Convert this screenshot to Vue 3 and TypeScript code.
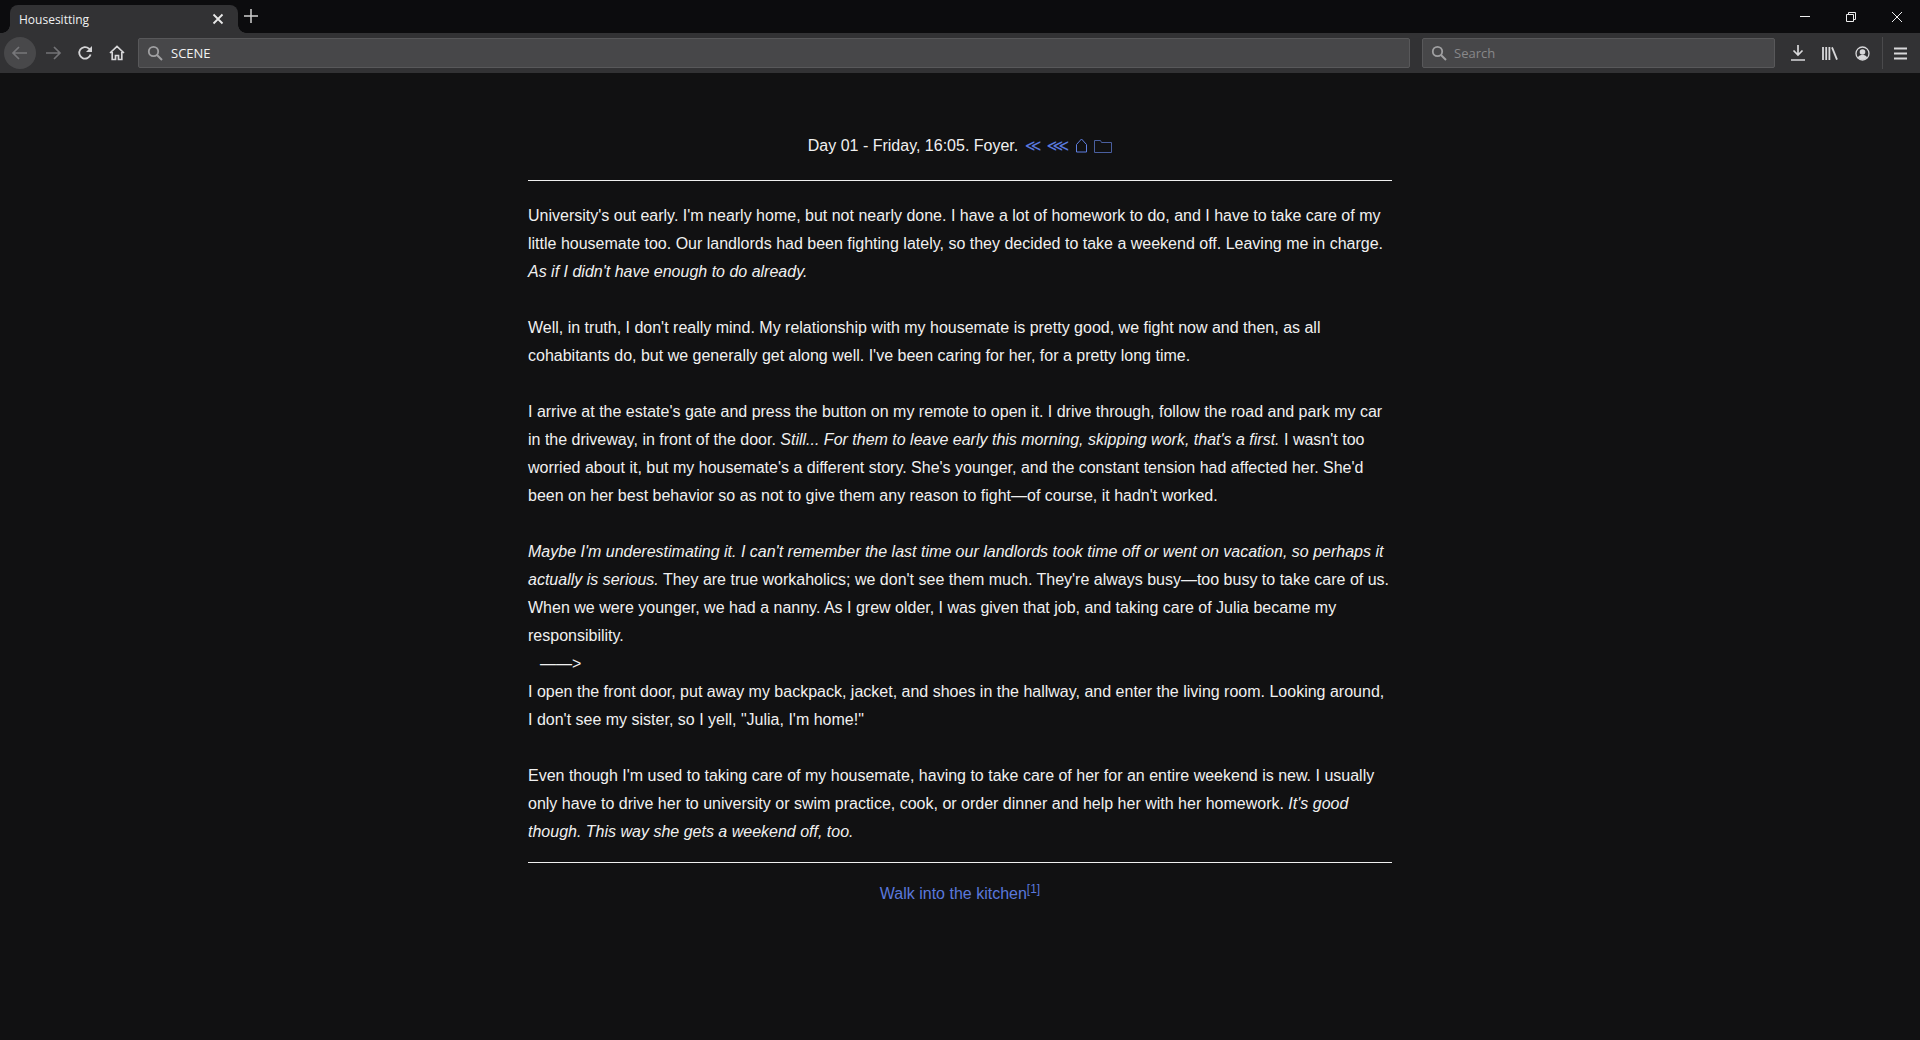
<script setup lang="ts">
const placeholder = 'Search';
</script>

<template>
  <div class="window">
    <div class="tabbar">
      <div class="tab">
        <span class="tab-title">Housesitting</span>
        <svg class="tab-close" width="12" height="12" viewBox="0 0 12 12"><path d="M1.5 1.5l9 9M10.5 1.5l-9 9" stroke="#e8e8e8" stroke-width="1.8" fill="none" /></svg>
      </div>
      <svg class="new-tab" width="14" height="14" viewBox="0 0 14 14"><path d="M7 0v14M0 7h14" stroke="#d0d0d0" stroke-width="1.5" fill="none" /></svg>
      <div class="tabbar-fill"></div>
      <div class="win-buttons">
        <svg width="12" height="12" viewBox="0 0 12 12"><path d="M1 5.500h10" stroke="#eee" stroke-width="1" fill="none" /></svg>
        <svg width="12" height="12" viewBox="0 0 12 12"><path d="M1.500 3.500h7v7h-7zM3.500 3.500v-2h7v7h-2" stroke="#eee" stroke-width="1" fill="none" /></svg>
        <svg width="12" height="12" viewBox="0 0 12 12"><path d="M1 1l10 10M11 1L1 11" stroke="#eee" stroke-width="1" fill="none" /></svg>
      </div>
    </div>
    <div class="toolbar">
      <div class="nav-back">
        <svg width="18" height="16" viewBox="0 0 18 16"><path d="M16 8H2M8 2L2 8l6 6" stroke="#77777a" stroke-width="1.7" fill="none" /></svg>
      </div>
      <svg class="nav-fwd" width="18" height="16" viewBox="0 0 18 16"><path d="M2 8h14M10 2l6 6-6 6" stroke="#737376" stroke-width="1.7" fill="none" /></svg>
      <svg class="nav-reload" width="16" height="16" viewBox="0 0 16 16"><path d="M13.600 9.500A5.800 5.800 0 1 1 12 3.600L14 5.400" stroke="#d4d4d6" stroke-width="1.800" fill="none" /><path d="M15 1v6H9z" fill="#d4d4d6" /></svg>
      <svg class="nav-home" width="16" height="16" viewBox="0 0 16 16"><path d="M1 8l7-6.500L15 8M3.200 7v7.500h3.300v-4h3v4h3.300V7" stroke="#d8d8da" stroke-width="1.700" fill="none" /></svg>
      <div class="urlbar">
        <svg width="16" height="16" viewBox="0 0 16 16"><circle cx="6.500" cy="6.500" r="4.700" stroke="#a0a0a2" stroke-width="1.800" fill="none" /><path d="M10 10l5 5" stroke="#a0a0a2" stroke-width="1.900" /></svg>
        <span class="url-text">SCENE</span>
      </div>
      <div class="searchbar">
        <svg width="16" height="16" viewBox="0 0 16 16"><circle cx="6.500" cy="6.500" r="4.700" stroke="#a0a0a2" stroke-width="1.800" fill="none" /><path d="M10 10l5 5" stroke="#a0a0a2" stroke-width="1.900" /></svg>
        <span class="search-text">{{ placeholder }}</span>
      </div>
      <div class="tools">
        <span class="tool"><svg width="14" height="16" viewBox="0 0 14 16"><path d="M7 0v10M2.500 5.500L7 10l4.500-4.500M0 15h14" stroke="#d8d8da" stroke-width="1.700" fill="none" /></svg></span>
        <span class="tool"><svg width="16" height="13" viewBox="0 0 16 13"><path d="M1 0v13M4.200 0v13M7.400 0v13" stroke="#d8d8da" stroke-width="1.800" fill="none" /><path d="M10 0.300L15 12.700" stroke="#d8d8da" stroke-width="1.800" fill="none" /></svg></span>
        <span class="tool"><svg width="15" height="15" viewBox="0 0 15 15"><circle cx="7.500" cy="7.500" r="6.500" stroke="#d8d8da" stroke-width="1.300" fill="none" /><circle cx="7.500" cy="6" r="2.800" fill="#d8d8da" /><path d="M2.800 11.500c1-2 2.700-2.500 4.700-2.500s3.700.5 4.700 2.500a6 6 0 0 1-9.400 0z" fill="#d8d8da" /></svg></span>
      </div>
      <div class="tool-sep"></div>
      <svg class="menu-btn" width="13" height="13" viewBox="0 0 13 13"><path d="M0 1.500h13M0 6.500h13M0 11.500h13" stroke="#d8d8da" stroke-width="1.800" fill="none" /></svg>
    </div>
    <main class="page">
      <div class="passage">
        <div class="header">
          Day 01 - Friday, 16:05. Foyer.
          <span class="nav-link chev">≪</span>
          <span class="nav-link chev triple">⋘</span>
          <svg class="head-icon home-icon" width="13" height="15" viewBox="0 0 13 15"><path d="M1.500 14V6.500l5-5.500 5 5.500V14z" stroke="#5f7fe0" stroke-width="1" fill="none" /></svg>
          <svg class="head-icon folder-icon" width="18" height="14" viewBox="0 0 18 14"><path d="M.5 13.500V1.500h6l1 2h10v10z" stroke="#4a5f9f" stroke-width="1" fill="none" /></svg>
        </div>
        <hr class="rule rule-top" />
        <div class="story">
          University's out early. I'm nearly home, but not nearly done. I have a lot of homework to do, and I have to take care of my little housemate too. Our landlords had been fighting lately, so they decided to take a weekend off. Leaving me in charge. <em>As if I didn't have enough to do already.</em>
          <br /><br />
          Well, in truth, I don't really mind. My relationship with my housemate is pretty good, we fight now and then, as all cohabitants do, but we generally get along well. I've been caring for her, for a pretty long time.
          <br /><br />
          I arrive at the estate's gate and press the button on my remote to open it. I drive through, follow the road and park my car in the driveway, in front of the door. <em>Still... For them to leave early this morning, skipping work, that's a first.</em> I wasn't too worried about it, but my housemate's a different story. She's younger, and the constant tension had affected her. She'd been on her best behavior so as not to give them any reason to fight—of course, it hadn't worked.
          <br /><br />
          <em>Maybe I'm underestimating it. I can't remember the last time our landlords took time off or went on vacation, so perhaps it actually is serious.</em> They are true workaholics; we don't see them much. They're always busy—too busy to take care of us. When we were younger, we had a nanny. As I grew older, I was given that job, and taking care of Julia became my responsibility.
          <br />
          <span class="arrow">——&gt;</span>
          <br />
          I open the front door, put away my backpack, jacket, and shoes in the hallway, and enter the living room. Looking around, I don't see my sister, so I yell, "Julia, I'm home!"
          <br /><br />
          Even though I'm used to taking care of my housemate, having to take care of her for an entire weekend is new. I usually only have to drive her to university or swim practice, cook, or order dinner and help her with her homework. <em>It's good though. This way she gets a weekend off, too.</em>
        </div>
        <hr class="rule rule-bottom" />
        <div class="choice">
          <a class="choice-link">Walk into the kitchen</a><sup class="choice-key">[1]</sup>
        </div>
      </div>
    </main>
  </div>
</template>

<style scoped>
.window {
  height: 1040px;
  display: flex;
  flex-direction: column;
  overflow: hidden;
  background: #111112;
  font-family: "Liberation Sans", Arial, sans-serif;
}

.tabbar {
  height: 33px;
  display: flex;
  align-items: center;
  background: #0c0c0e;
  flex-shrink: 0;
}

.tab {
  position: relative;
  width: 228px;
  height: 28px;
  margin-top: 5px;
  margin-left: 10px;
  padding: 0 14px 0 9px;
  box-sizing: border-box;
  display: flex;
  align-items: center;
  justify-content: space-between;
  background: #323234;
  border-radius: 8px 8px 0 0;
  color: #f0f0f0;
  font-family: "Open Sans", sans-serif;
  font-size: 12px;
}

.tab::before,
.tab::after {
  content: "";
  position: absolute;
  bottom: 0;
  width: 8px;
  height: 8px;
}

.tab::before {
  left: -8px;
  background: radial-gradient(circle at 0 0, #0c0c0e 7.500px, #323234 8px);
}

.tab::after {
  right: -8px;
  background: radial-gradient(circle at 100% 0, #0c0c0e 7.500px, #323234 8px);
}

.new-tab {
  margin-left: 6px;
  margin-bottom: 2px;
}

.tabbar-fill {
  flex: 1;
}

.win-buttons {
  display: flex;
  align-items: center;
  gap: 34px;
  padding-right: 17px;
}

.toolbar {
  height: 40px;
  display: flex;
  align-items: center;
  background: #323234;
  flex-shrink: 0;
}

.nav-back {
  width: 32px;
  height: 32px;
  margin-left: 4px;
  border-radius: 50%;
  background: #48484a;
  display: flex;
  align-items: center;
  justify-content: center;
}

.nav-fwd {
  margin-left: 8px;
}

.nav-reload {
  margin-left: 15px;
}

.nav-home {
  margin-left: 16px;
}

.urlbar,
.searchbar {
  height: 30px;
  display: flex;
  align-items: center;
  gap: 8px;
  padding-left: 8px;
  box-sizing: border-box;
  background: #474749;
  border: 1px solid #58585a;
  border-radius: 2px;
}

.urlbar {
  width: 1272px;
  margin-left: 13px;
}

.searchbar {
  width: 353px;
  margin-left: 12px;
  gap: 7px;
}

.url-text {
  color: #f2f2f2;
  font-family: "Open Sans", sans-serif;
  font-size: 13px;
}

.search-text {
  color: #88888a;
  font-family: "Open Sans", sans-serif;
  font-size: 13px;
}

.tools {
  display: flex;
  align-items: center;
  margin-left: 7px;
}

.tool {
  width: 32px;
  display: flex;
  justify-content: center;
}

.tool-sep {
  width: 1px;
  height: 32px;
  margin-left: 4px;
  background: #4a4a4c;
}

.menu-btn {
  margin-left: 11px;
}

.page {
  flex: 1;
  background: #111112;
  display: flex;
  justify-content: center;
}

.passage {
  width: 864px;
  margin-top: 59px;
  color: #f0f0f0;
  font-size: 16px;
  line-height: 28px;
}

.header {
  text-align: center;
}

.nav-link {
  color: #5a78dc;
  margin-left: 2px;
}

.chev {
  font-family: "DejaVu Sans", sans-serif;
}

.triple {
  margin-left: 5px;
}

.head-icon {
  vertical-align: -2px;
}

.home-icon {
  margin-left: 6px;
}

.folder-icon {
  margin-left: 6px;
}

.rule {
  border: none;
  border-top: 1px solid #f0f0f0;
  height: 0;
}

.rule-top {
  margin: 20px 0 21px;
}

.rule-bottom {
  margin: 16px 0 17px;
}

.story em {
  font-style: italic;
}

.arrow {
  padding-left: 12px;
}

.choice {
  text-align: center;
}

.choice-link {
  color: #5a78dc;
}

.choice-key {
  color: #5a78dc;
  font-size: 12px;
  line-height: 0;
}
</style>

<style>
html,
body {
  margin: 0;
  background: #111112;
}
</style>
